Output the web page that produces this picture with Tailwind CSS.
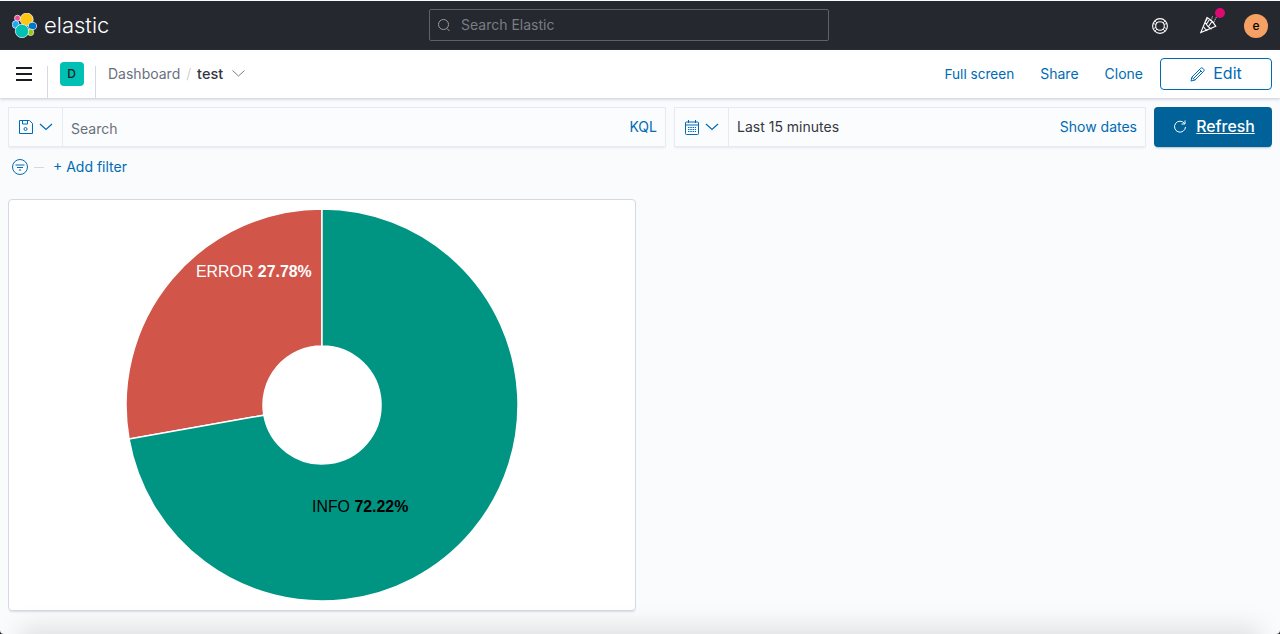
<!DOCTYPE html>
<html>
<head>
<meta charset="utf-8">
<script src="https://cdn.jsdelivr.net/npm/@tailwindcss/browser@4"></script>
</head>
<body class="m-0 bg-[#25282f]">
<div class="relative w-[1280px] h-[634px] overflow-hidden rounded-b-[4px] bg-[#fafbfd] font-['Inter',sans-serif] pt-px">
  <header class="h-[49px] bg-[#25282f] flex items-center relative">
    <div class="flex items-center w-[429px] pl-3">
      <svg width="25" height="25" viewBox="0 0 25 25" class="mr-[7px] -mt-[1px]" stroke="#fff" stroke-width=".7">
        <circle cx="5.500" cy="5.200" r="3" fill="#f04e98"/>
        <ellipse cx="3.700" cy="11.500" rx="3.400" ry="3.900" fill="#1ba9f5"/>
        <circle cx="14.700" cy="6.500" r="6.500" fill="#fec514"/>
        <ellipse cx="20.500" cy="13" rx="4.100" ry="3.700" fill="#0077cc"/>
        <ellipse cx="18.500" cy="19.300" rx="3.200" ry="3.300" fill="#93c90e"/>
        <circle cx="10" cy="18" r="6.700" fill="#00bfb3"/>
      </svg>
      <span class="text-[22px] leading-none font-light text-white -mt-[1px]">elastic</span>
    </div>
    <div class="w-[400px] h-8 -mt-[1px] border border-[#5e6167] rounded-[2px] flex items-center pl-[7px]">
      <svg width="14" height="14" viewBox="0 0 14 14" fill="none" stroke="#9a9ca1" stroke-width="1" class="mr-[10px]"><circle cx="6.500" cy="6.500" r="5"/><path d="M10 10.500l2.500 2.500"/></svg>
      <span class="text-sm text-[#7b7d83]">Search Elastic</span>
    </div>
    <div class="flex-1 flex items-center justify-end pr-3 relative">
      <svg width="16" height="16" viewBox="0 0 16 16" fill="none" stroke="#fff" stroke-width="1.100" class="mr-[32px]">
        <circle cx="8" cy="8" r="7.400"/><circle cx="8" cy="8" r="4.300"/>
        <path d="M2.800 2.800l2.200 2.200M13.200 2.800L11 5M2.800 13.200L5 11M13.200 13.200L11 11M1.500 5.500l2.500 1M14.500 5.500l-2.500 1M1.500 10.500l2.500-1M14.500 10.500l-2.500-1" stroke-width=".8"/>
      </svg>
      <svg width="18" height="18" viewBox="0 0 18 18" fill="none" stroke="#fff" stroke-width="1.100" class="mr-[26px] -mt-[1px]">
        <path d="M7 1.500L.8 16.500l15-6.200c-1-1.500-2.200-3.500-4-5.300C10.300 3.500 8.500 2.300 7 1.500z"/>
        <path d="M5 6.500c1.500 2.500 3.500 5 6.500 6.800M3.300 10.500c1 1.500 2 3 4 4.300M7.500 2.500l-2 2.800M9.500 3.500L6.500 8M12 5.500L8.500 10.500"/>
        <path d="M10 5l2-2.500M12.500 6.500L15 5.500M12 1.500l.5-1M15.500 2l1-.5M14.500 4l1-.5" stroke-width="1" stroke-dasharray="1.200 .8"/>
      </svg>
      <div class="w-6 h-6 rounded-full bg-[#f6a163] flex items-center justify-center text-xs font-medium text-black">e</div>
      <div class="absolute right-[55px] -top-[6px] w-[10px] h-[10px] rounded-full bg-[#dd0a73]"></div>
    </div>
  </header>

  <nav class="h-12 bg-white flex items-center shadow-[0_1px_3px_rgba(105,120,155,0.4)] relative">
    <div class="w-[47px] h-12 flex items-center pl-4">
      <div class="w-4 flex flex-col gap-1 -mt-[1px]">
        <div class="h-[2px] bg-[#1a1c21]"></div><div class="h-[2px] bg-[#1a1c21]"></div><div class="h-[2px] bg-[#1a1c21]"></div>
      </div>
    </div>
    <div class="w-[49px] h-12 flex flex-col items-center relative border-l border-r border-transparent">
      <div class="absolute left-[-1px] bottom-0 w-px h-8 bg-[#d3dae6]"></div>
      <div class="absolute right-[-1px] bottom-0 w-px h-8 bg-[#d3dae6]"></div>
      <div class="w-6 h-6 mt-3 rounded bg-[#00bfb3] flex items-center justify-center text-xs font-medium text-[#1a1c21]">D</div>
    </div>
    <div class="flex items-center ml-3 text-sm">
      <span class="text-[#69707d]">Dashboard</span>
      <span class="text-[#c2c7d0] mx-[6px] font-light">/</span>
      <span class="text-[#343741] font-medium text-[14.500px]">test</span>
      <svg width="13" height="7" viewBox="0 0 13 7" fill="none" stroke="#69707d" stroke-width=".9" class="ml-[9px]"><path d="M.5.500l6 5.500 6-5.500"/></svg>
    </div>
    <div class="ml-auto flex items-center text-sm text-[#006bb4]">
      <span class="text-[13.600px] mt-[1px]">Full screen</span>
      <span class="ml-[26px]">Share</span>
      <span class="ml-[26px]">Clone</span>
      <div class="ml-[17px] mr-2 w-[112px] h-8 border border-[#006bb4] rounded flex items-center justify-center text-base -mt-[1px]">
        <svg width="15" height="15" viewBox="0 0 15 15" fill="none" stroke="#006bb4" stroke-width="1" class="mr-2 mt-[2px]"><path d="M1 14l.8-3.800L10.700 1.300a1.500 1.500 0 0 1 2.100 0l.9.9a1.500 1.500 0 0 1 0 2.100L4.800 13.200z"/><path d="M1.800 10.200l3 3M9.500 2.500l3 3M3.500 11.500l7.500-7.500"/></svg>
        <span class="-mt-[1px]">Edit</span>
      </div>
    </div>
  </nav>

  <div class="flex px-2 gap-2 mt-[9px] w-[1280px]">
    <div class="w-[658px] h-10 flex items-stretch border border-[#e6eaf2] bg-[#fbfcfd] shadow-[0_2px_2px_-1px_rgba(152,162,179,0.2)]">
      <div class="w-[54px] border-r border-[#e6eaf2] flex items-center pl-[10px] gap-[6px]">
        <svg width="14" height="14" viewBox="0 0 14 14" fill="none" stroke="#006bb4" stroke-width="1"><path d="M.5.500h10l3 3v10H.5z"/><path d="M3.500.500v3.500h5V.500"/><circle cx="6.500" cy="9" r="1.500"/></svg>
        <svg width="14" height="8" viewBox="0 0 14 8" fill="none" stroke="#006bb4" stroke-width="1.200"><path d="M1 1l6 5.500L13 1"/></svg>
      </div>
      <div class="flex-1 flex items-center pl-2 pr-2 text-sm justify-between">
        <span class="text-[#69707d] mt-[3px]">Search</span>
        <span class="text-[#006bb4] -mt-[1px]">KQL</span>
      </div>
    </div>
    <div class="w-[472px] h-10 flex items-stretch border border-[#e6eaf2] bg-[#fbfcfd] shadow-[0_2px_2px_-1px_rgba(152,162,179,0.2)]">
      <div class="w-[54px] border-r border-[#e6eaf2] flex items-center pl-[10px] gap-[6px]">
        <svg width="14" height="15" viewBox="0 0 14 15" fill="none" stroke="#006bb4" stroke-width="1"><rect x=".5" y="2" width="13" height="12.500" rx="1"/><path d="M3.500 0v3M10.500 0v3M.5 5h13"/><path d="M3 7.500h8M3 9.500h8M3 11.500h8" stroke-dasharray="1.500 .8"/></svg>
        <svg width="14" height="8" viewBox="0 0 14 8" fill="none" stroke="#006bb4" stroke-width="1.200"><path d="M1 1l6 5.500L13 1"/></svg>
      </div>
      <div class="flex-1 flex items-center pl-2 pr-2 text-sm justify-between">
        <span class="text-[#343741]">Last 15 minutes</span>
        <span class="text-[#006bb4]">Show dates</span>
      </div>
    </div>
    <div class="w-[118px] h-10 bg-[#006298] rounded flex items-center justify-center text-base font-medium text-white shadow-[0_2px_2px_-1px_rgba(0,60,100,0.3)]">
      <svg width="14" height="14" viewBox="0 0 14 14" fill="none" stroke="#fff" stroke-width="1" class="mr-[9px] ml-[2px]"><path d="M11.500 3.500A5.500 5.500 0 1 0 12.500 7"/><path d="M12 .5v3.500H8.500"/></svg>
      <span class="underline text-[15.800px] -mt-[1px]">Refresh</span>
    </div>
  </div>

  <div class="flex items-center pl-3 h-5 mt-[10px] text-sm text-[#006bb4]">
    <svg width="16" height="16" viewBox="0 0 16 16" fill="none" stroke="#006bb4" stroke-width="1"><circle cx="8" cy="8" r="7.500"/><path d="M3.500 6h9M5 8.500h6M6.800 11h2.400"/></svg>
    <div class="w-[10px] h-px bg-[#d3dae6] ml-[6px]"></div>
    <span class="ml-[9px]">+ Add filter</span>
  </div>

  <div class="relative ml-2 mt-[22px] w-[628px] h-[412px] bg-white border border-[#d3dae6] rounded-[4px] shadow-[0_2px_2px_-1px_rgba(152,162,179,0.35)]">
    <svg width="626" height="410" viewBox="0 0 626 410" class="block">
      <g transform="translate(-9 -200)" stroke="#fff" stroke-width="1.500">
        <path fill="#d15649" d="M322 209A196 196 0 0 0 129 439L263.900 415.200A59 59 0 0 1 322 346Z"/>
        <path fill="#009482" d="M322 209A196 196 0 1 1 129 439L263.900 415.200A59 59 0 1 0 322 346Z"/>
      </g>
    </svg>
    <div class="absolute left-[187px] top-[62px] text-[15.900px] leading-5 text-white font-['Liberation_Sans',sans-serif]">ERROR <b>27.78%</b></div>
    <div class="absolute left-[303px] top-[297px] text-[15.900px] leading-5 text-black font-['Liberation_Sans',sans-serif]">INFO <b>72.22%</b></div>
  </div>

  <div class="absolute left-[30px] right-[30px] -bottom-[22px] h-[20px] shadow-[0_0_24px_10px_rgba(0,0,0,0.10)]"></div>
</div>
</body>
</html>
